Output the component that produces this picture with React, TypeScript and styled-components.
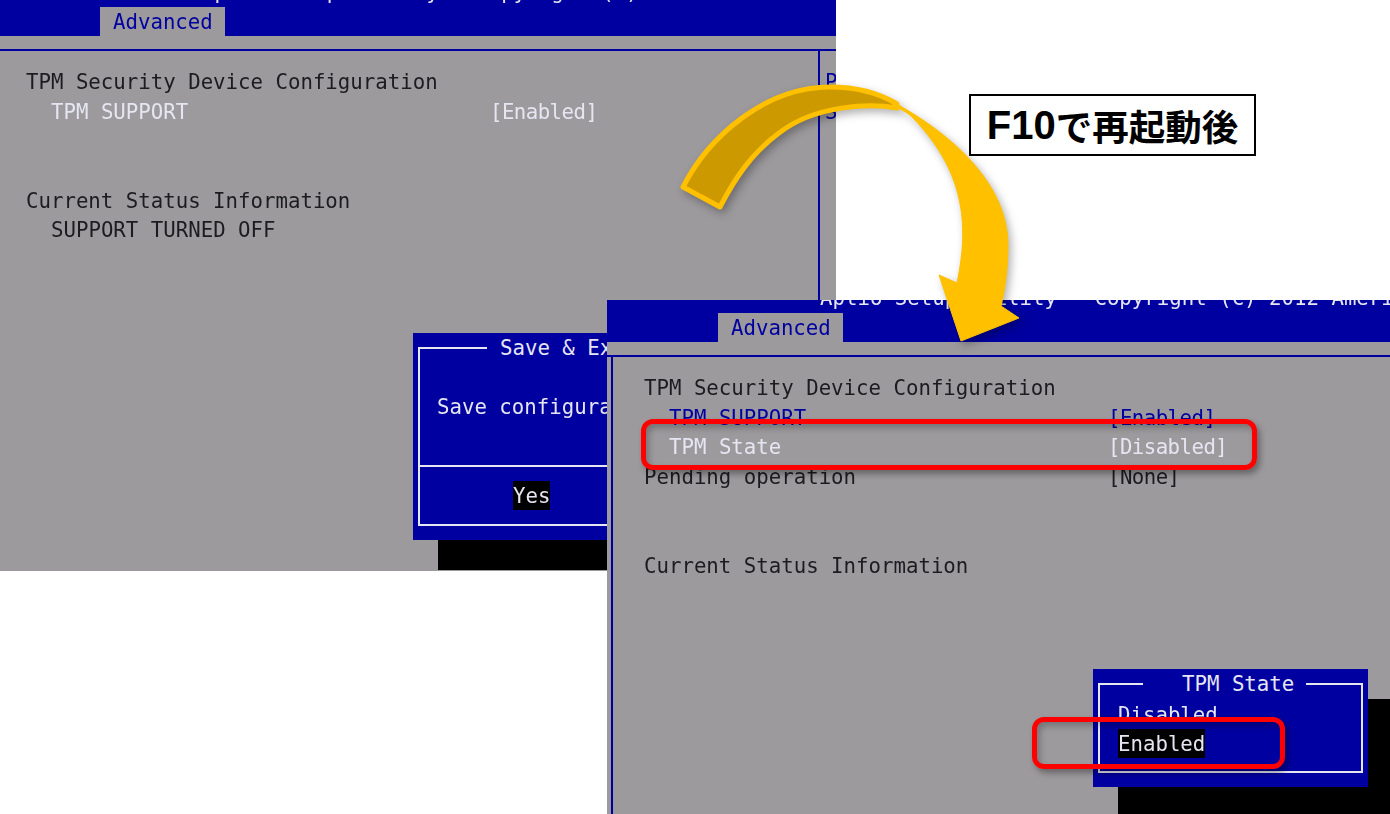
import * as React from "react";
import styled, { createGlobalStyle, css } from "styled-components";

const GREY = "#9c9a9d";
const BLUE = "#0000a0";
const LIGHT = "#e6e6f2";
const INK = "#1c1c20";

const GlobalStyle = createGlobalStyle`
  html, body {
    margin: 0;
    padding: 0;
    background: #ffffff;
  }
`;

const biosText = css`
  font-family: "DejaVu Sans Mono", "Liberation Mono", monospace;
  font-size: 20.72px;
  line-height: 33px;
  white-space: pre;
  filter: blur(0.35px);
`;

const Stage = styled.div`
  position: relative;
  width: 1390px;
  height: 814px;
  overflow: hidden;
  background: #ffffff;
`;

const Screen = styled.section<{ $x: number; $y: number; $w: number; $h: number }>`
  position: absolute;
  left: ${(p) => p.$x}px;
  top: ${(p) => p.$y}px;
  width: ${(p) => p.$w}px;
  height: ${(p) => p.$h}px;
  overflow: hidden;
  background: ${GREY};
`;

const ScreenInner = styled.div<{ $cropX: number; $cropY: number }>`
  display: flex;
  flex-direction: column;
  width: 1500px;
  height: 900px;
  margin-left: -${(p) => p.$cropX}px;
  margin-top: -${(p) => p.$cropY}px;
`;

const Banner = styled.header`
  display: flex;
  flex-direction: column;
  flex: none;
  height: 42px;
  overflow: hidden;
  background: ${BLUE};
`;

const BannerTitle = styled.div`
  ${biosText}
  flex: none;
  height: 13px;
  margin: -18px 0 0 213px;
  color: ${LIGHT};
`;

const Tab = styled.div`
  ${biosText}
  flex: none;
  width: 125px;
  height: 29px;
  margin: auto 0 0 111px;
  box-sizing: border-box;
  padding-left: 13px;
  background: ${GREY};
  color: ${BLUE};
  line-height: 31px;
`;

const Strip = styled.div`
  flex: none;
  height: 13px;
  border-bottom: 2px solid ${BLUE};
`;

const Panel = styled.div`
  display: flex;
  flex: 1;
`;

const MainColumn = styled.div`
  flex: none;
  box-sizing: border-box;
  width: 827px;
  margin-left: 4px;
  padding: 15px 0 0 31px;
  border-left: 2px solid ${BLUE};
  border-right: 2px solid ${BLUE};
`;

const HelpColumn = styled.div`
  padding: 15px 0 0 5px;
`;

const HelpLine = styled.div`
  ${biosText}
  height: 29.65px;
  color: ${BLUE};
`;

const Row = styled.div`
  display: grid;
  grid-template-columns: 464px auto;
  height: 29.65px;
`;

type Tone = "ink" | "light" | "blue";
const toneColor: Record<Tone, string> = { ink: INK, light: LIGHT, blue: BLUE };

const Cell = styled.span<{ $tone: Tone; $indent?: boolean }>`
  ${biosText}
  color: ${(p) => toneColor[p.$tone]};
  padding-left: ${(p) => (p.$indent ? 25 : 0)}px;
`;

const Value = styled(Cell)`
  letter-spacing: -0.55px;
`;

const Dialog = styled.div<{ $x: number; $y: number; $w: number; $h: number }>`
  position: absolute;
  left: ${(p) => p.$x}px;
  top: ${(p) => p.$y}px;
  width: ${(p) => p.$w}px;
  height: ${(p) => p.$h}px;
  box-sizing: border-box;
  padding: 14px 5px;
  background: ${BLUE};
  box-shadow: 25px 30px 0 #000000;
`;

const Frame = styled.div`
  position: relative;
  display: flex;
  flex-direction: column;
  box-sizing: border-box;
  height: 100%;
  border: 2px solid ${LIGHT};
`;

const FrameTitle = styled.div<{ $left: number; $pad: number }>`
  ${biosText}
  position: absolute;
  top: -16px;
  left: ${(p) => p.$left}px;
  height: 26px;
  padding: 0 12px 0 ${(p) => p.$pad}px;
  background: ${BLUE};
  color: ${LIGHT};
  line-height: 31px;
  filter: none;
`;

const MessagePane = styled.div`
  ${biosText}
  display: flex;
  align-items: center;
  flex: none;
  box-sizing: border-box;
  height: 118px;
  padding-left: 17px;
  border-bottom: 2px solid ${LIGHT};
  color: ${LIGHT};
`;

const ButtonPane = styled.div`
  display: flex;
  align-items: center;
  flex: 1;
  padding-left: 93px;
`;

const Highlight = styled.span`
  ${biosText}
  display: block;
  width: fit-content;
  height: 29px;
  line-height: 31px;
  background: #000000;
  color: ${LIGHT};
`;

const OptionList = styled.div`
  display: flex;
  flex-direction: column;
  padding: 14px 0 0 18px;
`;

const Option = styled.div`
  ${biosText}
  height: 30px;
  color: ${LIGHT};
`;

const ArrowSvg = styled.svg`
  position: absolute;
  left: 660px;
  top: 70px;
  width: 380px;
  height: 290px;
  overflow: visible;
  filter: drop-shadow(3px 4px 4px rgba(0, 0, 0, 0.3));
`;

const CaptionBox = styled.div`
  position: absolute;
  left: 969px;
  top: 94px;
  display: flex;
  align-items: center;
  justify-content: center;
  box-sizing: border-box;
  width: 287px;
  height: 62px;
  border: 2px solid #000000;
  background: #ffffff;
  color: #000000;
  font-family: "Liberation Sans", "Noto Sans CJK JP", sans-serif;
  font-size: 36.5px;
  font-weight: 700;
  white-space: nowrap;
`;

const CaptionLatin = styled.span`
  font-size: 40px;
`;

const Callout = styled.div<{ $x: number; $y: number; $w: number; $h: number }>`
  position: absolute;
  left: ${(p) => p.$x}px;
  top: ${(p) => p.$y}px;
  width: ${(p) => p.$w}px;
  height: ${(p) => p.$h}px;
  box-sizing: border-box;
  border: 5px solid #ff0000;
  border-radius: 12px;
  box-shadow: 3px 4px 6px rgba(0, 0, 0, 0.35), inset 3px 4px 6px rgba(0, 0, 0, 0.25);
`;

const Blank = () => <Row />;

const BiosChrome = ({ help, children }: { help?: boolean; children: React.ReactNode }) => (
  <>
    <Banner>
      <BannerTitle>Aptio Setup Utility - Copyright (C) 2012 American Megatrends, Inc.</BannerTitle>
      <Tab>Advanced</Tab>
    </Banner>
    <Strip />
    <Panel>
      <MainColumn>{children}</MainColumn>
      {help && (
        <HelpColumn>
          <HelpLine>Pr</HelpLine>
          <HelpLine>S</HelpLine>
        </HelpColumn>
      )}
    </Panel>
  </>
);

export default function App() {
  return (
    <Stage>
      <GlobalStyle />

      <Screen $x={0} $y={0} $w={836} $h={571}>
        <ScreenInner $cropX={11} $cropY={6}>
          <BiosChrome help>
            <Row>
              <Cell $tone="ink">TPM Security Device Configuration</Cell>
            </Row>
            <Row>
              <Cell $tone="light" $indent>TPM SUPPORT</Cell>
              <Value $tone="light">[Enabled]</Value>
            </Row>
            <Blank />
            <Blank />
            <Row>
              <Cell $tone="ink">Current Status Information</Cell>
            </Row>
            <Row>
              <Cell $tone="ink" $indent>SUPPORT TURNED OFF</Cell>
            </Row>
          </BiosChrome>
        </ScreenInner>
        <Dialog $x={413} $y={333} $w={420} $h={207}>
          <Frame>
            <FrameTitle $left={67} $pad={13}>Save &amp; Exit</FrameTitle>
            <MessagePane>Save configuration and exit?</MessagePane>
            <ButtonPane>
              <Highlight>Yes</Highlight>
            </ButtonPane>
          </Frame>
        </Dialog>
      </Screen>

      <Screen $x={607} $y={300} $w={783} $h={514}>
        <ScreenInner $cropX={0} $cropY={0}>
          <BiosChrome>
            <Row>
              <Cell $tone="ink">TPM Security Device Configuration</Cell>
            </Row>
            <Row>
              <Cell $tone="blue" $indent>TPM SUPPORT</Cell>
              <Value $tone="blue">[Enabled]</Value>
            </Row>
            <Row>
              <Cell $tone="light" $indent>TPM State</Cell>
              <Value $tone="light">[Disabled]</Value>
            </Row>
            <Row>
              <Cell $tone="ink">Pending operation</Cell>
              <Value $tone="ink">[None]</Value>
            </Row>
            <Blank />
            <Blank />
            <Row>
              <Cell $tone="ink">Current Status Information</Cell>
            </Row>
          </BiosChrome>
        </ScreenInner>
        <Dialog $x={486} $y={369} $w={275} $h={118}>
          <Frame>
            <FrameTitle $left={43} $pad={39}>TPM State</FrameTitle>
            <OptionList>
              <Option>Disabled</Option>
              <Highlight>Enabled</Highlight>
            </OptionList>
          </Frame>
        </Dialog>
      </Screen>

      <ArrowSvg viewBox="660 70 380 290" aria-hidden="true">
        <path
          d="M683 187 C708 138 764 87 830 87 C857 87 879 93 897 104 L897 108 C870 103 815 105 779 133 C752 153 735 178 720 207 Z"
          fill="#cc9900"
          stroke="#ffc000"
          strokeWidth="5"
          strokeLinejoin="round"
        />
        <path
          d="M893 102 C945 130 1008 180 1008 245 C1008 265 1006 285 1001 306 L1019 318 L961 341 L939 275 L957 283 C968 230 968 175 913 118 C908 113 903 110 893 106 Z"
          fill="#ffc000"
          stroke="#ffc000"
          strokeWidth="1"
          strokeLinejoin="round"
        />
      </ArrowSvg>

      <CaptionBox>
        <CaptionLatin>F10</CaptionLatin>で再起動後
      </CaptionBox>

      <Callout $x={641} $y={419} $w={616} $h={51} />
      <Callout $x={1032} $y={717} $w={253} $h={52} />
    </Stage>
  );
}
